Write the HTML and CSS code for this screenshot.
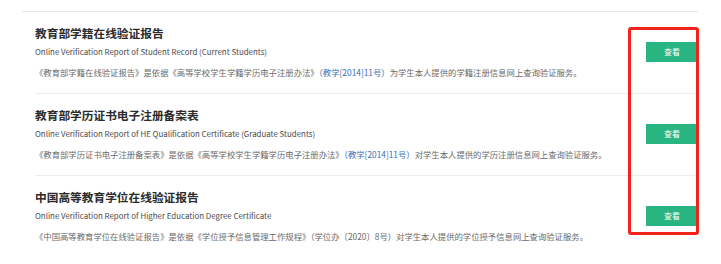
FILE: index.html
```html
<!DOCTYPE html>
<html lang="zh-CN">
<head>
<meta charset="utf-8">
<title>报告</title>
<link rel="stylesheet" href="styles.css">
</head>
<body>
<div class="panel">
  <div class="list">
    <div class="item">
      <div class="info">
        <div class="title">教育部学籍在线验证报告</div>
        <div class="sub">Online Verification Report of Student Record (Current Students)</div>
        <div class="desc">《教育部学籍在线验证报告》是依据《高等学校学生学籍学历电子注册办法》<span class="link">（教学[2014]11号）</span>为学生本人提供的学籍注册信息网上查询验证服务。</div>
      </div>
      <a class="btn">查看</a>
    </div>
    <div class="item">
      <div class="info">
        <div class="title">教育部学历证书电子注册备案表</div>
        <div class="sub">Online Verification Report of HE Qualification Certificate (Graduate Students)</div>
        <div class="desc">《教育部学历证书电子注册备案表》是依据《高等学校学生学籍学历电子注册办法》<span class="link">（教学[2014]11号）</span>对学生本人提供的学历注册信息网上查询验证服务。</div>
      </div>
      <a class="btn">查看</a>
    </div>
    <div class="item last">
      <div class="info">
        <div class="title">中国高等教育学位在线验证报告</div>
        <div class="sub">Online Verification Report of Higher Education Degree Certificate</div>
        <div class="desc">《中国高等教育学位在线验证报告》是依据《学位授予信息管理工作规程》（学位办〔2020〕8号）对学生本人提供的学位授予信息网上查询验证服务。</div>
      </div>
      <a class="btn">查看</a>
    </div>
  </div>
  <div class="mark"></div>
</div>
</body>
</html>
```
FILE: styles.css
```css
html, body {
  margin: 0;
  padding: 0;
  background: #ffffff;
}
body {
  font-family: "Noto Sans CJK SC", "Noto Sans", sans-serif;
  width: 721px;
  height: 264px;
  overflow: hidden;
}
.panel {
  position: relative;
  margin: 11px 0 0 22px;
  width: 676px;
  border-top: 1px solid #e6e6e6;
}
.list {
  margin-left: 13px;
}
.item {
  display: flex;
  align-items: center;
  justify-content: space-between;
  padding: 12px 0 14px;
  border-bottom: 1px solid #ececec;
}
.item.last {
  border-bottom: none;
}
.info {
  display: flex;
  flex-direction: column;
}
.title {
  font-size: 11.7px;
  line-height: 18px;
  font-weight: bold;
  color: #2b2b2b;
}
.sub {
  margin-top: 3px;
  font-size: 7.9px;
  line-height: 14px;
  color: #4a4a4a;
}
.desc {
  margin-top: 6px;
  font-size: 8.35px;
  line-height: 14px;
  color: #6a6a6a;
  white-space: nowrap;
}
.link {
  color: #3a6fb5;
}
.btn {
  display: flex;
  align-items: center;
  justify-content: center;
  width: 52px;
  height: 20px;
  background: #29b582;
  color: #ffffff;
  font-size: 8px;
}
.mark {
  position: absolute;
  left: 606px;
  top: 15px;
  width: 65px;
  height: 202px;
  border: 3px solid #f2231c;
  border-radius: 3px;
}
```
